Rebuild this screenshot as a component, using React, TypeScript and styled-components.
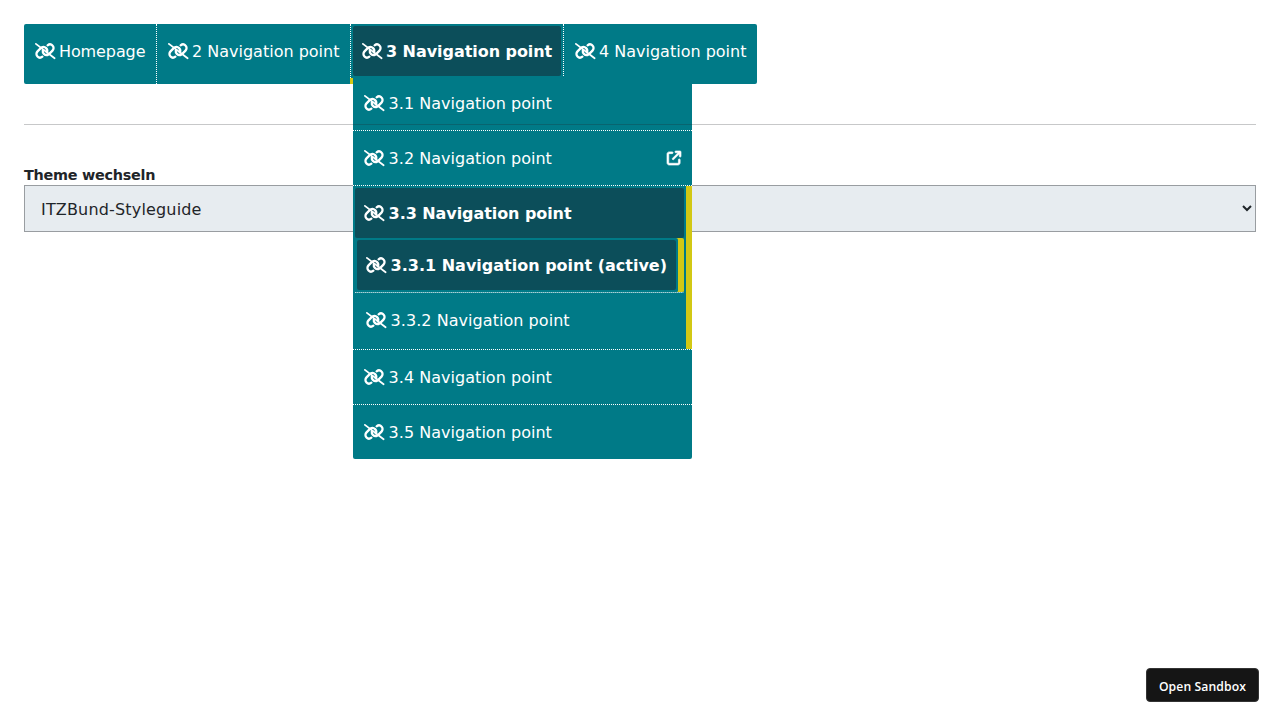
import React from "react";
import styled, { createGlobalStyle, css } from "styled-components";
import { FaArrowUpRightFromSquare } from "react-icons/fa6";

const teal = "#007a87";
const petrol = "#0c4e5a";
const yellow = "#d2c814";

const GlobalStyle = createGlobalStyle`
  *, *::before, *::after { box-sizing: border-box; }
  body {
    margin: 0;
    background: #fff;
    color: #1f2529;
    font-family: Verdana, "DejaVu Sans", sans-serif;
    font-size: 16px;
    line-height: 24px;
  }
  ul { list-style: none; margin: 0; padding: 0; }
`;

const Page = styled.main`
  min-height: 100vh;
  padding: 24px;
`;

const NavBar = styled.ul`
  display: flex;
  width: 733px;
  height: 60px;
  background: ${teal};
  border-radius: 2px;
`;

const NavItem = styled.li<{ $width: number; $open?: boolean }>`
  position: relative;
  flex: 0 0 ${(p) => p.$width}px;
  min-width: 0;
  padding: 2px;
  border-right: 1px dotted #fff;
  &:last-child { border-right: 0; }
  ${(p) =>
    p.$open &&
    css`
      &::after {
        content: "";
        position: absolute;
        left: -1px;
        bottom: 0;
        width: 3px;
        height: 6px;
        background: ${yellow};
      }
    `}
`;

const NavLink = styled.a<{ $active?: boolean }>`
  display: flex;
  align-items: center;
  height: 50px;
  padding: 0 9px;
  border-radius: 2px;
  color: #fff;
  white-space: nowrap;
  background: ${(p) => (p.$active ? petrol : "transparent")};
  font-weight: ${(p) => (p.$active ? 700 : 400)};
`;

const Caption = styled.span<{ $spacing: number }>`
  padding-top: 2px;
  letter-spacing: ${(p) => p.$spacing}px;
`;

const IconFrame = styled.svg`
  flex: none;
  width: 20px;
  height: 16px;
  margin-right: 4px;
  overflow: visible;
`;

const ExternalIcon = styled(FaArrowUpRightFromSquare)`
  flex: none;
  width: 14px;
  height: 14px;
  margin-left: auto;
  overflow: visible;
  stroke: #fff;
  stroke-width: 24px;
`;

const SubMenu = styled.ul`
  position: absolute;
  z-index: 1;
  top: 52px;
  left: 2px;
  width: 339px;
  background: ${teal};
  border-radius: 0 0 2px 2px;

  ${NavLink} { padding-left: 9.3px; }
  ${IconFrame} { margin-right: 4.3px; }
`;

const SubItem = styled.li<{ $marked?: boolean }>`
  padding: 2px;
  border-bottom: 1px dotted #fff;
  &:last-child { border-bottom: 0; }
  ${(p) =>
    p.$marked &&
    css`
      padding-right: 8px;
      box-shadow: inset -6px 0 ${yellow};
    `}
`;

const NestedMenu = styled.ul`
  ${SubItem}:first-child { border-radius: 0 2px 2px 0; }
`;

const Rule = styled.hr`
  position: relative;
  z-index: 2;
  height: 1px;
  margin: 40px 0;
  border: 0;
  background: #1f2529;
  opacity: 0.25;
`;

const FieldLabel = styled.label`
  display: block;
  height: 20px;
  line-height: 20px;
  font-size: 14.4px;
  font-weight: 700;
  letter-spacing: -0.27px;
`;

const Select = styled.select`
  display: block;
  width: 100%;
  height: 47px;
  padding: 1px 0 0 12px;
  border: 1px solid #999da1;
  border-radius: 0;
  background: #e7ecf0;
  color: #1f2529;
  font: inherit;
  letter-spacing: 0.17px;
`;

const SandboxButton = styled.button`
  position: fixed;
  right: 21px;
  bottom: 18px;
  width: 113px;
  height: 34px;
  padding: 3px 0 0;
  border: 1px solid #343434;
  border-radius: 4px;
  background: #151515;
  color: #fff;
  font: 600 12.2px "Open Sans", sans-serif;
  letter-spacing: 0.1px;
`;

function LinkIcon() {
  return (
    <IconFrame viewBox="0 0 20 16" fill="none" stroke="#fff" strokeWidth="2.3" strokeLinecap="round" aria-hidden="true">
      <path d="M.9 .9L19.6 15.3" strokeWidth="1.8" />
      <path d="M12.6 2.3C14.2 1 16.3 1.2 17.5 2.5C18.9 3.9 18.9 6.2 17.5 7.6L14.5 10.6" />
      <path d="M7.4 13.7C5.8 15 3.7 14.8 2.5 13.5C1.1 12.1 1.1 9.8 2.5 8.4L5.5 5.4" />
      <path d="M6.4 4.6C8 3.6 9.8 3.8 11.1 5.1C12.3 6.3 12.6 7.9 11.9 9.4" />
      <path d="M13.4 11.5C12 12.4 10.1 12.1 8.9 10.9C8 10 7.6 8.7 7.8 7.5" />
    </IconFrame>
  );
}

type EntryProps = {
  text: string;
  active?: boolean;
  spacing?: number;
  external?: boolean;
};

function Entry({ text, active, spacing = 0, external }: EntryProps) {
  return (
    <NavLink $active={active}>
      <LinkIcon />
      <Caption $spacing={spacing}>{text}</Caption>
      {external && <ExternalIcon />}
    </NavLink>
  );
}

export default function App() {
  return (
    <>
      <GlobalStyle />
      <Page>
        <nav>
          <NavBar>
            <NavItem $width={133}><Entry text="Homepage" spacing={-0.1} /></NavItem>
            <NavItem $width={194}><Entry text="2 Navigation point" /></NavItem>
            <NavItem $width={213} $open>
              <Entry text="3 Navigation point" active spacing={-0.05} />
              <SubMenu>
                <SubItem><Entry text="3.1 Navigation point" spacing={0.03} /></SubItem>
                <SubItem><Entry text="3.2 Navigation point" spacing={0.03} external /></SubItem>
                <SubItem $marked>
                  <Entry text="3.3 Navigation point" active spacing={-0.07} />
                  <NestedMenu>
                    <SubItem $marked><Entry text="3.3.1 Navigation point (active)" active /></SubItem>
                    <SubItem><Entry text="3.3.2 Navigation point" spacing={0.05} /></SubItem>
                  </NestedMenu>
                </SubItem>
                <SubItem><Entry text="3.4 Navigation point" spacing={0.03} /></SubItem>
                <SubItem><Entry text="3.5 Navigation point" spacing={0.03} /></SubItem>
              </SubMenu>
            </NavItem>
            <NavItem $width={193}><Entry text="4 Navigation point" /></NavItem>
          </NavBar>
        </nav>
        <Rule />
        <FieldLabel htmlFor="theme">Theme wechseln</FieldLabel>
        <Select id="theme">
          <option>ITZBund-Styleguide</option>
        </Select>
      </Page>
      <SandboxButton type="button">Open Sandbox</SandboxButton>
    </>
  );
}
